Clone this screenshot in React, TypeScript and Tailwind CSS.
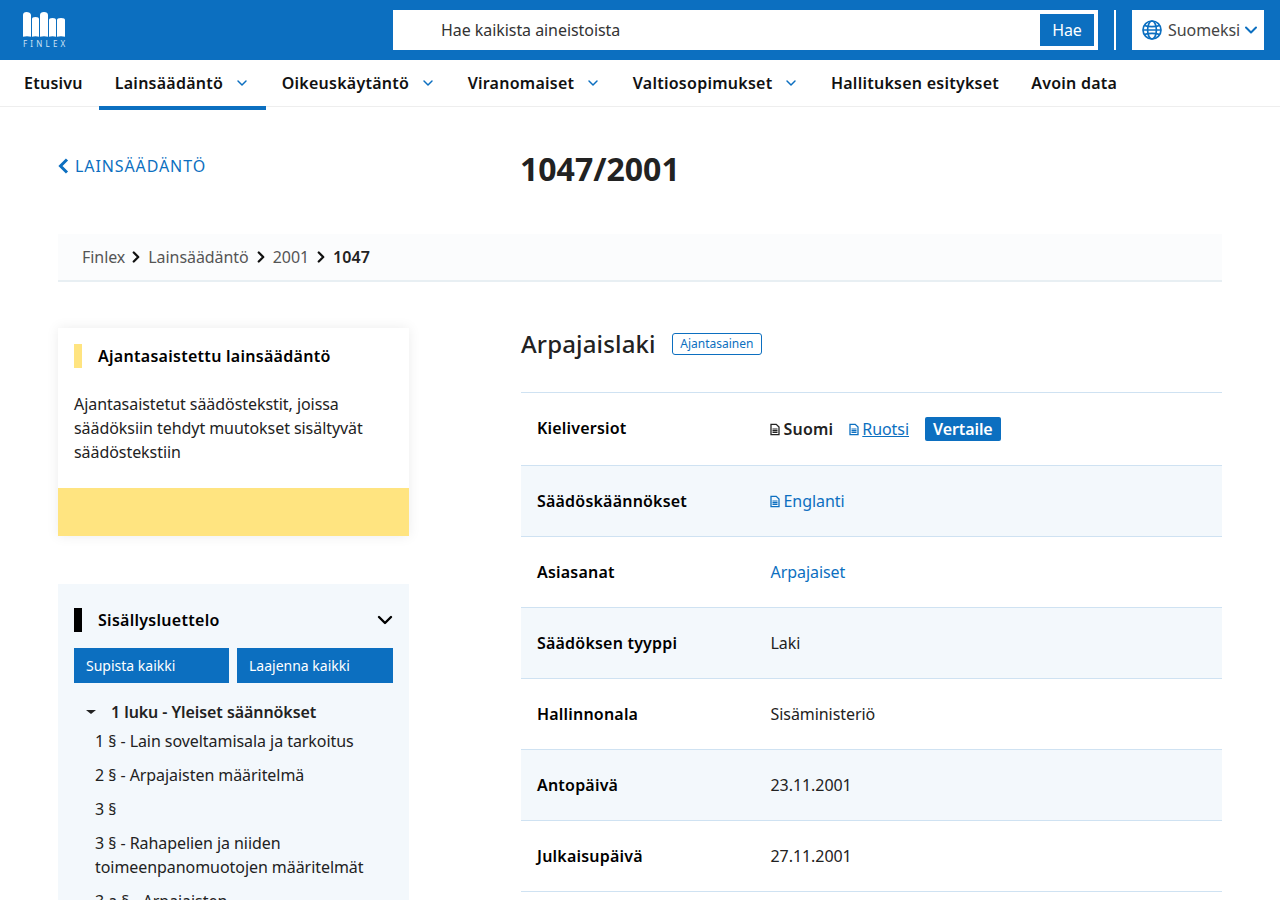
import { ChevronDown, ChevronRight } from "lucide-react";

const navItems = [
  { label: "Etusivu" },
  { label: "Lainsäädäntö", menu: true, active: true },
  { label: "Oikeuskäytäntö", menu: true },
  { label: "Viranomaiset", menu: true },
  { label: "Valtiosopimukset", menu: true },
  { label: "Hallituksen esitykset" },
  { label: "Avoin data" },
];

function Logo() {
  return (
    <div className="flex w-[46px] flex-col items-start">
      <svg width="42" height="25" viewBox="0 0 42 25" fill="#fff">
        <path d="M0 3C0 1.200 1.400 0 3.500 0S8 1.200 8 3V24.800C5.500 24 2.500 24 0 24.800z" />
        <path d="M9 7C9 5.800 10 5 12.500 5S16 5.800 16 7V24.800C14 24 11 24 9 24.800z" />
        <path d="M17 3C17 1.200 18.500 0 21 0S25 1.200 25 3V24.800C22.500 24 19.500 24 17 24.800z" />
        <path d="M26 8C26 6.800 27 6 29.500 6S33 6.800 33 8V24.800C31 24 28 24 26 24.800z" />
        <path d="M34 8C34 6.800 35 6 38 6S42 6.800 42 8V24.800C39.500 24 36.500 24 34 24.800z" />
      </svg>
      <span className="mt-[2px] text-[8px] leading-[10px] tracking-[3.200px] text-[#cfe3f5]">FINLEX</span>
    </div>
  );
}

function GlobeIcon() {
  return (
    <svg viewBox="0 0 20 20" className="h-5 w-5 text-[#0c6fc0]" fill="none" stroke="currentColor" strokeWidth="1.700">
      <circle cx="10" cy="10" r="9" />
      <ellipse cx="10" cy="10" rx="4.400" ry="9" />
      <path d="M2.500 5.500C6 7 14 7 17.500 5.500M2.500 14.500C6 13 14 13 17.500 14.500M1 10h18" />
    </svg>
  );
}

function DocIcon({ className }: { className: string }) {
  return (
    <svg viewBox="0 0 10 12" className={`inline-block h-[13px] w-[10px] ${className}`} fill="none" stroke="currentColor">
      <path d="M1 .8h5.200L9 3.600v7.600H1z" strokeWidth="1.300" />
      <path d="M2.500 5.500h5M2.500 7.200h5M2.500 8.900h5" strokeWidth="1.200" />
    </svg>
  );
}

function Crumb() {
  return <ChevronRight className="mx-[3px] h-[18px] w-[18px] text-[#111]" strokeWidth={3} />;
}

function Row({ label, striped, children }: { label: string; striped?: boolean; children: React.ReactNode }) {
  return (
    <div className={`flex h-[71px] items-center border-b border-[#cfe2f2] ${striped ? "bg-[#f3f8fc]" : "bg-white"}`}>
      <div className="w-[249.500px] pl-4 font-semibold tracking-[0.2px] text-[#000]">{label}</div>
      <div className="flex items-center text-[#222]">{children}</div>
    </div>
  );
}

function TocLink({ children }: { children: React.ReactNode }) {
  return <div className="mb-[10px] text-[#222]">{children}</div>;
}

export default function App() {
  return (
    <div className="h-screen overflow-hidden bg-white text-base leading-6 tracking-[-0.06px] text-[#222]" style={{ fontFamily: '"Noto Sans", sans-serif' }}>
      <header className="flex h-[60px] items-center bg-[#0c6fc0] pl-[23px] pr-4">
        <Logo />
        <div className="ml-[324px] flex h-[40px] w-[705px] items-center bg-white pl-12 pr-1">
          <span className="flex-1 text-[#333]">Hae kaikista aineistoista</span>
          <button className="flex h-8 w-[54px] items-center justify-center bg-[#0c6fc0] text-white">Hae</button>
        </div>
        <div className="ml-4 h-[40px] w-[2px] bg-white" />
        <div className="ml-4 flex h-[40px] w-[132px] items-center bg-white pl-[10px] text-[#444]">
          <GlobeIcon />
          <span className="ml-[6px]">Suomeksi</span>
          <ChevronDown className="ml-[1px] h-[20px] w-[20px] text-[#0c6fc0]" strokeWidth={2.400} />
        </div>
      </header>

      <nav className="flex h-[47px] border-b border-[#eeeeee] pl-2">
        {navItems.map((item) => (
          <div key={item.label} className={`flex h-[50px] items-center border-b-4 px-4 font-semibold tracking-[0.25px] text-[#111] ${item.active ? "border-[#0c6fc0]" : "border-transparent"}`}>
            {item.label}
            {item.menu && <ChevronDown className="ml-[10.500px] h-4 w-4 text-[#0c6fc0]" strokeWidth={2.200} />}
          </div>
        ))}
      </nav>

      <main className="px-[58px]">
        <div className="flex h-[127px] pt-[47px]">
          <div className="flex w-[463px] items-center self-start text-[#0c6fc0]">
            <svg viewBox="0 0 11 16" className="h-4 w-[11px]" fill="none" stroke="currentColor" strokeWidth="3">
              <path d="M9 1.500 2.500 8 9 14.500" />
            </svg>
            <span className="ml-[6px] tracking-[0.9px]">LAINSÄÄDÄNTÖ</span>
          </div>
          <h1 className="ml-[-1px] mt-[-5px] text-[32px] font-bold leading-[40px] tracking-normal text-[#222]">1047/2001</h1>
        </div>

        <div className="flex h-[48px] items-center border-b-2 border-[#e8eff3] bg-[#fbfcfd] pl-6 text-[#555]">
          <span className="mr-[-1px]">Finlex</span>
          <Crumb />
          <span>Lainsäädäntö</span>
          <Crumb />
          <span>2001</span>
          <Crumb />
          <span className="font-semibold tracking-[0.1px] text-[#222]">1047</span>
        </div>

        <div className="mt-[46px] flex">
          <aside className="w-[351px] shrink-0">
            <div className="h-[208px] bg-white shadow-[0_0_12px_rgba(0,0,0,0.08)]">
              <div className="flex h-[160px] flex-col px-4 pt-4">
                <div className="flex items-center">
                  <div className="h-6 w-2 bg-[#ffe480]" />
                  <div className="ml-4 font-semibold tracking-[0.28px] text-[#000]">Ajantasaistettu lainsäädäntö</div>
                </div>
                <p className="mt-6 text-[#222]">Ajantasaistetut säädöstekstit, joissa säädöksiin tehdyt muutokset sisältyvät säädöstekstiin</p>
              </div>
              <div className="h-12 bg-[#ffe480]" />
            </div>

            <div className="mt-12 bg-[#f3f8fc] px-4 pb-8 pt-6">
              <div className="flex items-center">
                <div className="h-6 w-2 bg-black" />
                <div className="ml-4 flex-1 font-semibold tracking-[0.28px] text-[#000]">Sisällysluettelo</div>
                <ChevronDown className="mr-[-4px] h-6 w-6 text-black" strokeWidth={2.400} />
              </div>
              <div className="mt-4 flex gap-2">
                <button className="h-[35px] w-[155px] bg-[#0c6fc0] pl-3 text-left text-sm tracking-normal text-white">Supista kaikki</button>
                <button className="h-[35px] flex-1 bg-[#0c6fc0] pl-3 text-left text-sm tracking-normal text-white">Laajenna kaikki</button>
              </div>
              <div className="mt-[17px] flex items-center font-semibold text-[#222]">
                <span className="ml-3 h-0 w-0 border-x-[5px] border-t-[4px] border-x-transparent border-t-[#222]" />
                <span className="ml-[15px] tracking-[-0.07px]">1 luku - Yleiset säännökset</span>
              </div>
              <div className="ml-[21px] mt-[5px]">
                <TocLink>1 § - Lain soveltamisala ja tarkoitus</TocLink>
                <TocLink>2 § - Arpajaisten määritelmä</TocLink>
                <TocLink>3 §</TocLink>
                <TocLink>3 § - Rahapelien ja niiden toimeenpanomuotojen määritelmät</TocLink>
                <TocLink>3 a § - Arpajaisten</TocLink>
              </div>
            </div>
          </aside>

          <section className="ml-[112px] flex-1">
            <div className="flex h-[64px] items-start">
              <h2 className="text-2xl font-medium leading-8 tracking-[0.15px] text-[#222]">Arpajaislaki</h2>
              <span className="ml-4 mt-[5px] rounded-[3px] border border-[#0c6fc0] px-[7.500px] text-xs leading-[20px] tracking-normal text-[#0c6fc0]">Ajantasainen</span>
            </div>
            <div className="border-t border-[#cfe2f2]">
              <div className="flex h-[73px] items-center border-b border-[#cfe2f2] bg-white">
                <div className="w-[248.500px] pb-[2px] pl-4 font-semibold tracking-[0.2px] text-[#000]">Kieliversiot</div>
                <div className="flex items-center">
                  <DocIcon className="mr-[4px] text-[#222]" />
                  <span className="font-semibold tracking-[0.2px] text-[#222]">Suomi</span>
                  <DocIcon className="ml-4 mr-[3px] text-[#0c6fc0]" />
                  <span className="text-[#0c6fc0] underline">Ruotsi</span>
                  <span className="ml-4 rounded-[2px] bg-[#0c6fc0] px-2 font-semibold tracking-[-0.1px] text-white">Vertaile</span>
                </div>
              </div>
              <Row label="Säädöskäännökset" striped>
                <DocIcon className="ml-[-1px] mr-[4px] text-[#0c6fc0]" />
                <span className="text-[#0c6fc0]">Englanti</span>
              </Row>
              <Row label="Asiasanat">
                <span className="text-[#0c6fc0]">Arpajaiset</span>
              </Row>
              <Row label="Säädöksen tyyppi" striped>Laki</Row>
              <Row label="Hallinnonala">Sisäministeriö</Row>
              <Row label="Antopäivä" striped>23.11.2001</Row>
              <Row label="Julkaisupäivä">27.11.2001</Row>
            </div>
          </section>
        </div>
      </main>
    </div>
  );
}
